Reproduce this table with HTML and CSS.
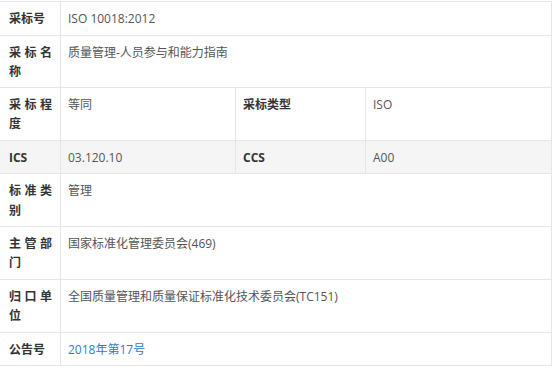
FILE: index.html
```html
<!DOCTYPE html>
<html lang="zh">
<head>
<meta charset="utf-8">
<link rel="stylesheet" href="styles.css">
</head>
<body>
<div class="wrap">
<table class="info">
  <colgroup>
    <col class="c1"><col class="c2"><col class="c3"><col class="c4">
  </colgroup>
  <tr>
    <th>采标号</th>
    <td colspan="3">ISO 10018:2012</td>
  </tr>
  <tr>
    <th>采标名称</th>
    <td colspan="3">质量管理-人员参与和能力指南</td>
  </tr>
  <tr>
    <th>采标程度</th>
    <td>等同</td>
    <th class="plain">采标类型</th>
    <td>ISO</td>
  </tr>
  <tr class="gray">
    <th>ICS</th>
    <td>03.120.10</td>
    <th class="plain">CCS</th>
    <td>A00</td>
  </tr>
  <tr>
    <th>标准类别</th>
    <td colspan="3">管理</td>
  </tr>
  <tr>
    <th>主管部门</th>
    <td colspan="3">国家标准化管理委员会(469)</td>
  </tr>
  <tr>
    <th>归口单位</th>
    <td colspan="3">全国质量管理和质量保证标准化技术委员会(TC151)</td>
  </tr>
  <tr>
    <th>公告号</th>
    <td colspan="3"><a class="link" href="#">2018年第17号</a></td>
  </tr>
</table>
</div>
</body>
</html>
```

FILE: styles.css
```css
html, body {
  margin: 0;
  padding: 0;
  background: #ffffff;
}

.wrap {
  padding-top: 1px;
  margin-left: -1px;
}

.info {
  border-collapse: collapse;
  table-layout: fixed;
  width: 553px;
  font-family: "Open Sans", "Noto Sans CJK SC", sans-serif;
  font-size: 12px;
  line-height: 19.2px;
  color: #555555;
}

.c1 { width: 61px; }
.c2 { width: 175px; }
.c3 { width: 130px; }
.c4 { width: auto; }

.info th,
.info td {
  border: 1px solid #e6e6e6;
  padding: 7px 7px 6.3px 7px;
  vertical-align: top;
  text-align: left;
}

.info th {
  font-weight: bold;
  color: #333333;
  padding-left: 9px;
  padding-right: 8px;
  text-align: justify;
}

.info th.plain {
  text-align: left;
  padding-left: 7px;
}

.info tr.gray th,
.info tr.gray td {
  background: #f5f5f5;
}

.link {
  color: #2e7bcb;
  text-decoration: none;
}
```
